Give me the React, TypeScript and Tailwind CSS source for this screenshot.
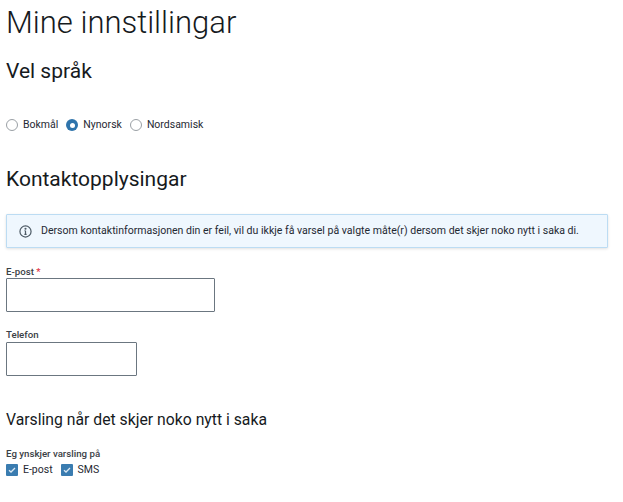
const font = "[font-family:Roboto,sans-serif]";

const Radio = ({ label, checked }: { label: string; checked?: boolean }) => (
  <label className="flex items-center gap-[5px]">
    {checked ? (
      <span className="flex h-3 w-3 items-center justify-center rounded-full bg-[#2f74ab]">
        <span className="h-[5px] w-[5px] rounded-full bg-white" />
      </span>
    ) : (
      <span className="h-3 w-3 rounded-full border border-[#9aa0a5] bg-white" />
    )}
    <span className="text-[10.5px] leading-3 text-[#1f2933]">{label}</span>
  </label>
);

const Check = ({ label }: { label: string }) => (
  <label className="flex items-center gap-[5px]">
    <span className="flex h-3 w-3 items-center justify-center rounded-[1px] bg-[#3a7cb0]">
      <svg viewBox="0 0 12 12" className="h-3 w-3" fill="none" stroke="#dbe9f4" strokeWidth="1.3">
        <path d="M3 6.2 5 8 9 4" />
      </svg>
    </span>
    <span className="text-[10.5px] leading-3 text-[#1f2933]">{label}</span>
  </label>
);

export default function App() {
  return (
    <div className={`h-[502px] w-[623px] overflow-hidden bg-white pl-[6px] text-[#161a1d] ${font}`}>
      <h1 className="pt-[3px] text-[31px] leading-[40px] font-light">Mine innstillingar</h1>
      <h2 className="mt-[14px] text-[21px] leading-7">Vel språk</h2>

      <div className="mt-[34px] flex gap-[8px]">
        <Radio label="Bokmål" />
        <Radio label="Nynorsk" checked />
        <Radio label="Nordsamisk" />
      </div>

      <h2 className="mt-[34px] text-[21px] leading-7">Kontaktopplysingar</h2>

      <div className="mt-[21px] flex h-[34px] w-[602px] items-center gap-[9px] rounded-[1px] border border-[#bcdcf3] bg-[#eff7fe] pl-[12px] shadow-[0_1px_3px_rgba(0,0,0,0.12)]">
        <svg viewBox="0 0 14 14" className="h-[13px] w-[13px]" fill="none" stroke="#4d5a65" strokeWidth="1.3">
          <circle cx="7" cy="7" r="6" />
          <path d="M7 6.2V10.2M5.8 10.2H8.2M5.9 6.2H7" />
          <circle cx="7" cy="4" r=".5" fill="#4d5a65" />
        </svg>
        <span className="text-[10.55px] leading-3 text-[#1f2933]">
          Dersom kontaktinformasjonen din er feil, vil du ikkje få varsel på valgte måte(r) dersom det skjer noko nytt i saka di.
        </span>
      </div>

      <div className="mt-[18px] text-[9.7px] leading-3 font-medium text-[#3a4045]">
        E-post <span className="text-[#e0303f]">*</span>
      </div>
      <input className="block h-[34px] w-[209px] rounded-[1px] border border-[#6b7680] bg-white" />

      <div className="mt-[17px] text-[9.7px] leading-3 font-medium text-[#3a4045]">Telefon</div>
      <input className="mt-[1px] block h-[34px] w-[131px] rounded-[1px] border border-[#6b7680] bg-white" />

      <h3 className="mt-[34px] text-[15.75px] leading-5">Varsling når det skjer noko nytt i saka</h3>

      <div className="mt-[18px] text-[9.7px] leading-3 font-medium text-[#3a4045]">Eg ynskjer varsling på</div>
      <div className="mt-[4px] flex gap-[8px]">
        <Check label="E-post" />
        <Check label="SMS" />
      </div>
    </div>
  );
}
